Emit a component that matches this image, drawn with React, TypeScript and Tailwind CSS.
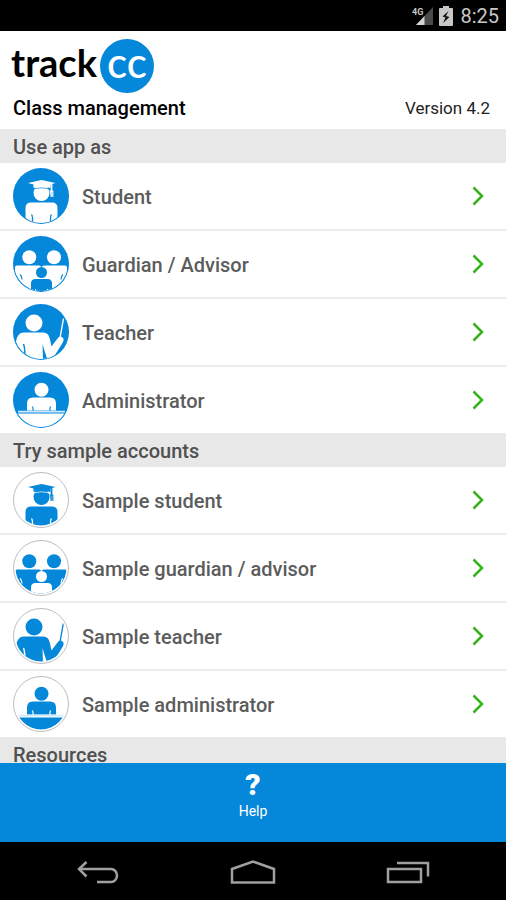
import type { ReactNode } from 'react';
import { clsx } from 'clsx';

interface Palette {
  ink: string;
  paper: string;
}

type Figure = (palette: Palette) => ReactNode;

interface Account {
  label: string;
  figure: Figure;
}

const BLUE = '#0587da';

const student: Figure = ({ ink, paper }) => (
  <>
    <path d="M12.5 56V40q0-5.5 5.5-5.5h21q5.5 0 5.5 5.500v16z" fill={ink} />
    <path d="M19.5 56v-5.5q0-3-1-4M37.5 56v-5.5q0-3 1-4" stroke={paper} strokeWidth="1.3" fill="none" />
    <circle cx="28.5" cy="25" r="8" fill={ink} />
    <path d="M20.5 21q8-2.5 16 0" stroke={paper} strokeWidth=".7" fill="none" />
    <path d="M15 15l13.5-3 14 3-5 1.500v3.500q-9-2.500-17 0v-3.500z" fill={ink} />
    <path d="M38.500 16v8" stroke={ink} strokeWidth="1.8" />
    <path d="M36.500 22.500h4v6.500h-3z" fill={ink} opacity=".8" />
  </>
);

const guardian: Figure = ({ ink, paper }) => (
  <>
    <circle cx="16.3" cy="21.3" r="7" fill={ink} />
    <circle cx="41" cy="21.3" r="7" fill={ink} />
    <path d="M2 31q0-1.500 2-1.500h22.500l2 1.500 2-1.500H52q2 0 2 1.500v26H2z" fill={ink} />
    <path d="M9 43.500q0-3.500-2-5M48 43.500q0-3.500 2-5" stroke={paper} strokeWidth="1.2" fill="none" />
    <path d="M18 56v-8.500q0-4.500 4.500-4.500h12q4.500 0 4.500 4.500V56z" fill={paper} />
    <circle cx="28.5" cy="36.5" r="5.5" fill={paper} />
    <path d="M22.500 56v-3M34.500 56v-3" stroke={ink} strokeWidth="1" />
  </>
);

const teacher: Figure = ({ ink, paper }) => (
  <>
    <circle cx="21" cy="19" r="8.5" fill={ink} />
    <path d="M3 38q1-9.500 8-9.500h19q6 0 7 7l1.500 7 6-8q2-3 4.500-1.500 3 2 .5 6L39 56H8z" fill={ink} />
    <path d="M50.5 14.5L47 34" stroke={ink} strokeWidth="1.4" />
    <path d="M10.500 40q1.500 3 1.500 16" stroke={paper} strokeWidth="1.5" fill="none" />
    <path d="M29.500 40q2 7 5 16h-4.500z" fill={paper} />
  </>
);

const administrator: Figure = ({ ink, paper }) => (
  <>
    <circle cx="28.5" cy="17.7" r="7" fill={ink} />
    <path d="M14 39v-7.500q0-6 6-6h17q6 0 6 6V39z" fill={ink} />
    <path d="M20 39v-2.500q0-1-.8-2M37 39v-2.500q0-1 .8-2" stroke={paper} strokeWidth="1.2" fill="none" />
    <path d="M3 38.500h51V41H3z" fill={paper} />
    <path d="M5 38.800h47v1.700H5z" fill="#d3eafa" />
    <path d="M3 41.500h51V57H3z" fill={ink} />
  </>
);

const appRoles: Account[] = [
  { label: 'Student', figure: student },
  { label: 'Guardian / Advisor', figure: guardian },
  { label: 'Teacher', figure: teacher },
  { label: 'Administrator', figure: administrator },
];

const sampleAccounts: Account[] = [
  { label: 'Sample student', figure: student },
  { label: 'Sample guardian / advisor', figure: guardian },
  { label: 'Sample teacher', figure: teacher },
  { label: 'Sample administrator', figure: administrator },
];

function RoleIcon({ figure, outlined }: { figure: Figure; outlined: boolean }) {
  const palette = outlined ? { ink: BLUE, paper: '#fff' } : { ink: '#fff', paper: BLUE };
  const clipId = outlined ? 'disc-inset' : 'disc';

  return (
    <svg viewBox="0 0 56 56" className="size-14 shrink-0" aria-hidden="true">
      <clipPath id={clipId}>
        <circle cx="28" cy="28" r={outlined ? 25.5 : 27} />
      </clipPath>
      <circle
        cx="28"
        cy="28"
        r={outlined ? 27.5 : 28}
        fill={palette.paper}
        stroke={outlined ? '#bdbdbd' : 'none'}
      />
      <g clipPath={`url(#${clipId})`}>{figure(palette)}</g>
    </svg>
  );
}

function SectionTitle({ children }: { children: ReactNode }) {
  return (
    <h2 className="flex h-[34px] items-center bg-[#e8e8e8] px-[13px] pt-px text-[20px] font-medium text-[#505050]">
      {children}
    </h2>
  );
}

function AccountList({ accounts, outlined = false }: { accounts: Account[]; outlined?: boolean }) {
  return (
    <ul>
      {accounts.map(({ label, figure }, i) => (
        <li key={label} className={clsx(i < accounts.length - 1 && 'border-b-2 border-[#ececec]')}>
          <button className="flex h-[66px] w-full items-center gap-[13px] pr-[22px] pl-[13px] text-left">
            <RoleIcon figure={figure} outlined={outlined} />
            <span className="flex-1 pt-px text-[20px] font-medium text-[#5c5c5c]">{label}</span>
            <svg viewBox="0 0 12 20" className="h-5 w-3" fill="none" aria-hidden="true">
              <path d="M1.500 1.500L10 10l-8.500 8.500" stroke="#35b31b" strokeWidth="2.5" />
            </svg>
          </button>
        </li>
      ))}
    </ul>
  );
}

function StatusBar() {
  return (
    <div className="flex h-[31px] shrink-0 items-center justify-end bg-black pr-[7px] text-[#c8c8c8]">
      <svg viewBox="0 0 22 20" className="mr-[5px] h-5 w-[22px]" aria-hidden="true">
        <path d="M21 1v18H4z" fill="#4a4a4a" />
        <path d="M12.500 10v9H4z" fill="#d4d4d4" />
        <text x="0" y="8.5" fontSize="9" fontWeight="700" fill="#c8c8c8">4G</text>
      </svg>
      <svg viewBox="0 0 14 20" className="mr-[7px] h-5 w-3.5" aria-hidden="true">
        <path d="M4 0h6v2h3q1 0 1 1v16q0 1-1 1H1q-1 0-1-1V3q0-1 1-1h3z" fill="#c8c8c8" />
        <path d="M9.500 5L3.500 10.500l3 1-2.500 5.500 6.500-6-3.500-1z" fill="#111" />
      </svg>
      <span className="text-[20px]">8:25</span>
    </div>
  );
}

function Header() {
  return (
    <header className="flex h-[98px] shrink-0 flex-col bg-white px-[11px] pt-2">
      <h1 className="flex h-[54px] items-center gap-[3px] font-[Lato,sans-serif]">
        <span className="pb-2 text-[38px] leading-[46px] font-bold text-black">track</span>
        <span className="flex size-[54px] items-center justify-center rounded-full bg-[#0587da] pb-2 text-[42px] leading-[46px] font-medium text-white">
          cc
        </span>
      </h1>
      <div className="flex items-center justify-between px-[2px] pr-[5px] leading-[30px] text-black">
        <p className="text-[20px] font-medium">Class management</p>
        <p className="text-[17px] text-[#222]">Version 4.2</p>
      </div>
    </header>
  );
}

function NavigationBar() {
  const button = 'flex flex-1 items-center justify-center';

  return (
    <nav className="flex h-[58px] shrink-0 bg-black px-5 pt-1 text-[#a0a0a0]">
      <button className={button} aria-label="Back">
        <svg viewBox="0 0 44 26" className="h-[26px] w-11" fill="none" stroke="currentColor" strokeWidth="2.5">
          <path d="M3 9h32a6 6.500 0 0 1 0 13H21" />
          <path d="M10.500 2L3 9l7.500 7.500" />
        </svg>
      </button>
      <button className={button} aria-label="Home">
        <svg viewBox="0 0 46 26" className="h-[26px] w-[46px]" fill="none" stroke="currentColor" strokeWidth="2.5">
          <path d="M2 22.500V9l21-7.500L44 9v13.500z" />
        </svg>
      </button>
      <button className={button} aria-label="Recent apps">
        <svg viewBox="0 0 44 26" className="h-[26px] w-11" fill="none" stroke="currentColor" strokeWidth="2.5">
          <path d="M2 9h33v13H2zM11 3h31v13.500" />
        </svg>
      </button>
    </nav>
  );
}

export default function App() {
  return (
    <div className="flex h-screen flex-col bg-white font-[Roboto,sans-serif]">
      <StatusBar />
      <Header />

      <main className="min-h-0 flex-1 overflow-y-auto [scrollbar-width:none]">
        <SectionTitle>Use app as</SectionTitle>
        <AccountList accounts={appRoles} />
        <SectionTitle>Try sample accounts</SectionTitle>
        <AccountList accounts={sampleAccounts} outlined />
        <SectionTitle>Resources</SectionTitle>
      </main>

      <button className="flex h-[79px] shrink-0 flex-col items-center bg-[#0587da] pt-1 text-white">
        <span className="text-[30px] leading-[36px] font-black" aria-hidden="true">?</span>
        <span className="text-[14px] leading-[16px]">Help</span>
      </button>

      <NavigationBar />
    </div>
  );
}
